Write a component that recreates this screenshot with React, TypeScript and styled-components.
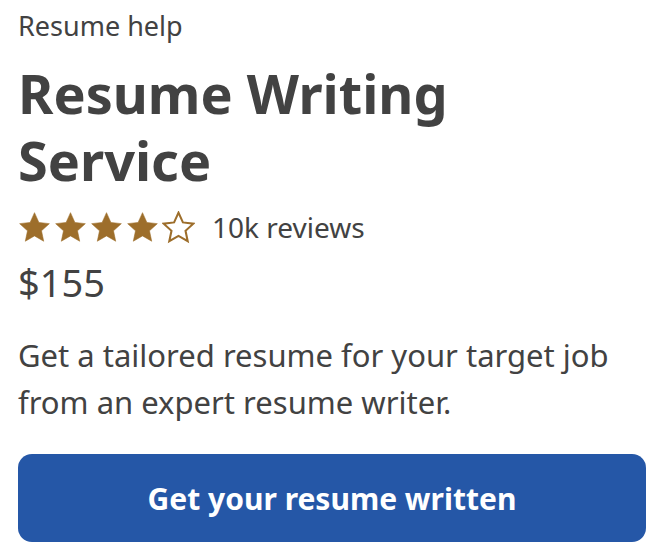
import styled, { createGlobalStyle } from "styled-components";

const GlobalStyle = createGlobalStyle`
    html, body {
        margin: 0;
        padding: 0;
        background: #ffffff;
    }
    body {
        font-family: "Noto Sans", "Open Sans", sans-serif;
        color: #424242;
    }
`;

const Card = styled.div`
    width: 628px;
    padding: 9px 0 0 18px;
    display: flex;
    flex-direction: column;
`;

const Eyebrow = styled.div`
    font-size: 27px;
    line-height: 34px;
`;

const Title = styled.h1`
    margin: 17px 0 0;
    font-size: 54px;
    font-weight: 700;
    line-height: 67px;
    width: 460px;
`;

const RatingRow = styled.div`
    display: flex;
    align-items: center;
    gap: 17px;
    margin-top: 16px;
`;

const Stars = styled.div`
    display: flex;
    gap: 3px;
`;

const Reviews = styled.span`
    font-size: 28px;
    line-height: 34px;
`;

const Price = styled.div`
    margin-top: 15px;
    font-size: 38px;
    line-height: 46px;
`;

const Description = styled.p`
    margin: 27px 0 0;
    font-size: 31px;
    line-height: 47px;
`;

const Button = styled.button`
    margin-top: 28px;
    height: 88px;
    border: none;
    border-radius: 14px;
    background: #2557a7;
    color: #ffffff;
    font-family: "Noto Sans", "Open Sans", sans-serif;
    font-size: 30px;
    font-weight: 700;
    cursor: pointer;
`;

const STAR = "M12 1.2l3.2 7.1 7.6.9-5.7 5.2 1.6 7.6L12 18.1 5.3 22l1.6-7.6-5.7-5.2 7.6-.9z";

function Star({ filled }: { filled: boolean }) {
    return (
        <svg width="33" height="33" viewBox="0 0 24 24">
            <path
                d={STAR}
                fill={filled ? "#9d6e2b" : "none"}
                stroke="#9d6e2b"
                strokeWidth={filled ? 0.4 : 1.5}
                strokeLinejoin="miter"
            />
        </svg>
    );
}

export default function App() {
    const rating = 4;
    return (
        <>
            <GlobalStyle />
            <Card>
                <Eyebrow>Resume help</Eyebrow>
                <Title>Resume Writing Service</Title>
                <RatingRow>
                    <Stars>
                        {[0, 1, 2, 3, 4].map((i) => (
                            <Star key={i} filled={i < rating} />
                        ))}
                    </Stars>
                    <Reviews>10k reviews</Reviews>
                </RatingRow>
                <Price>$155</Price>
                <Description>
                    Get a tailored resume for your target job from an expert resume writer.
                </Description>
                <Button>Get your resume written</Button>
            </Card>
        </>
    );
}
